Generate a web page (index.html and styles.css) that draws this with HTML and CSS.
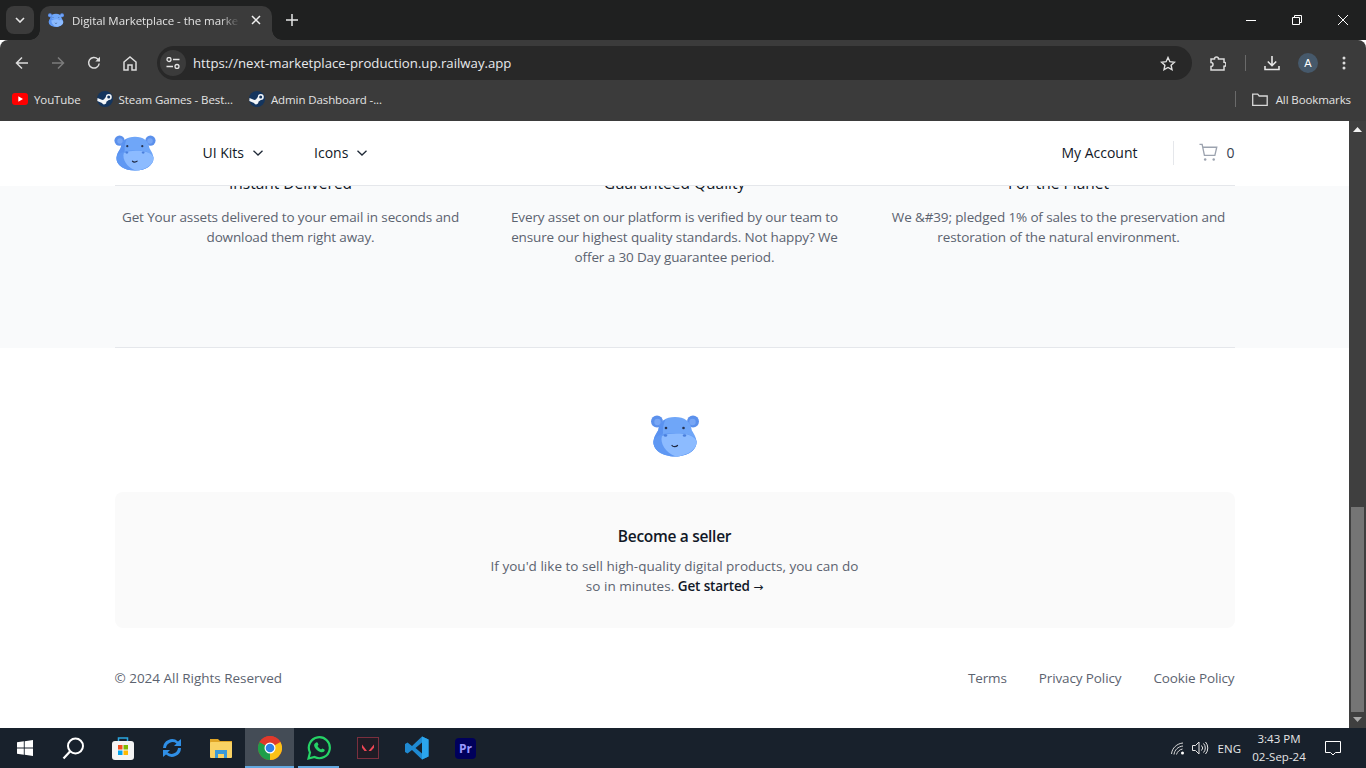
FILE: index.html
```html
<!DOCTYPE html>
<html lang="en">
<head>
  <meta charset="UTF-8" />
  <title>Digital Marketplace - the marketplace</title>
  <link rel="stylesheet" href="styles.css">
</head>
<body>
  <svg class="defs" width="0" height="0">
    <symbol id="hippo" viewBox="0 0 48 42">
      <circle cx="6" cy="6.500" r="6" fill="#5b90ec"/>
      <circle cx="42" cy="6.500" r="6" fill="#5b90ec"/>
      <circle cx="6.500" cy="7" r="3.200" fill="#77a6f5"/>
      <circle cx="41.500" cy="7" r="3.200" fill="#77a6f5"/>
      <path d="M24 2c9.500 0 15.500 4.500 16.500 12 .4 3 4.500 6 5 12.500.5 8.500-9 15-21.500 15S2 35 2.500 26.500c.5-6.500 4.600-9.500 5-12.500C8.500 6.500 14.500 2 24 2z" fill="#6fa6f8"/>
      <path d="M14.500 4.500C10 6.500 8 10 7.500 14c-.4 3-4.500 6-5 12.500-.3 4.500 2 8.500 7.500 11.500-1-8 0-15 2-20-.5-4 .5-9.500 2.500-13.500z" fill="#5a92f0"/>
      <path d="M24 18c13 0 21 3 21.500 8.500.5 8.500-9 15-21.500 15S2 35 2.500 26.500C3 21 11 18 24 18z" fill="#5f98f3"/>
      <path d="M25 18.500c11 0 20 2.500 20.500 8.500.3 7.500-9 13.500-20.500 14.500C15 38.500 8.500 28 11 21c4-1.700 9-2.500 14-2.500z" fill="#8cbbff"/>
      <circle cx="15" cy="13" r="1.300" fill="#26324f"/>
      <circle cx="32.500" cy="13" r="1.300" fill="#26324f"/>
      <ellipse cx="14.500" cy="20.500" rx="1.700" ry="1.300" fill="#4a7fdc"/>
      <ellipse cx="33.500" cy="20.500" rx="1.700" ry="1.300" fill="#4a7fdc"/>
      <path d="M21 30.500c1 1.500 4 1.500 5.500 0" fill="none" stroke="#1d2740" stroke-width="1.300" stroke-linecap="round"/>
    </symbol>
    <symbol id="steam" viewBox="0 0 16 16">
      <circle cx="8" cy="8" r="8" fill="#14355e"/>
      <path d="M.3 10 5 12a2.300 2.300 0 0 0 4.400-1.200l2.400-1.800a3 3 0 1 0-3-3L6.900 8.500A2.300 2.300 0 0 0 5.400 9L.5 7z" fill="#f2f5f8"/>
      <circle cx="11.700" cy="6" r="1.500" fill="#14355e"/>
    </symbol>
  </svg>

  <div class="tabstrip">
    <button class="tab-list"><svg width="10" height="6" viewBox="0 0 10 6"><path d="M1 1l4 4 4-4" fill="none" stroke="#e6e6e6" stroke-width="1.600"/></svg></button>
    <div class="tab">
      <svg class="favicon" width="16" height="14"><use href="#hippo"/></svg>
      <span class="tab-title">Digital Marketplace - the marke</span>
      <svg class="tab-close" width="10" height="10" viewBox="0 0 10 10"><path d="M1 1l8 8M9 1l-8 8" stroke="#f0f0f0" stroke-width="1.500"/></svg>
    </div>
    <svg class="new-tab" width="12" height="12" viewBox="0 0 12 12"><path d="M6 0v12M0 6h12" stroke="#e6e6e6" stroke-width="1.500"/></svg>
    <div class="win-controls">
      <svg width="10" height="10" viewBox="0 0 10 10"><path d="M0 5.500h10" stroke="#fff"/></svg>
      <svg width="10" height="10" viewBox="0 0 10 10"><path d="M2.500 2V.500h7v7H8M.5 2.500h7v7h-7z" fill="none" stroke="#fff"/></svg>
      <svg width="10" height="10" viewBox="0 0 10 10"><path d="M0 0l10 10M10 0L0 10" stroke="#fff"/></svg>
    </div>
  </div>

  <div class="toolbar">
    <button class="tool"><svg width="14" height="14" viewBox="0 0 14 14"><path d="M13 7H2M7 1.500 1.500 7 7 12.500" fill="none" stroke="#dcdcdc" stroke-width="1.500"/></svg></button>
    <button class="tool"><svg width="14" height="14" viewBox="0 0 14 14"><path d="M1 7h11M7 1.500 12.500 7 7 12.500" fill="none" stroke="#7c7c7c" stroke-width="1.500"/></svg></button>
    <button class="tool"><svg width="14" height="14" viewBox="0 0 14 14"><path d="M12.200 7.500A5.300 5.300 0 1 1 10.700 3L12.500 5" fill="none" stroke="#dcdcdc" stroke-width="1.500"/><path d="M13 .800V5.500H8.300z" fill="#dcdcdc"/></svg></button>
    <button class="tool"><svg width="14" height="15" viewBox="0 0 14 15"><path d="M1 14V6l6-5 6 5v8H9V9H5v5z" fill="none" stroke="#dcdcdc" stroke-width="1.500"/></svg></button>
    <div class="omnibox">
      <span class="site-info"><svg width="14" height="12" viewBox="0 0 14 12"><circle cx="3" cy="2.500" r="2" fill="none" stroke="#e6e6e6" stroke-width="1.300"/><path d="M7 2.500h6.500M.5 9.500H7" stroke="#e6e6e6" stroke-width="1.300"/><circle cx="11" cy="9.500" r="2" fill="none" stroke="#e6e6e6" stroke-width="1.300"/></svg></span>
      <span class="url">https://next-marketplace-production.up.railway.app</span>
      <svg class="star" width="16" height="15" viewBox="0 0 16 15"><path d="m8 1.500 1.900 4.200 4.600.500-3.400 3 .9 4.500L8 11.500l-4 2.200.9-4.500-3.400-3 4.600-.500z" fill="none" stroke="#e0e0e0" stroke-width="1.400"/></svg>
    </div>
    <div class="tool-right">
      <button class="tool"><svg width="16" height="16" viewBox="0 0 16 16"><path d="M1 4h3.500a2 2 0 0 1 4 0H14v3.300a2 2 0 0 1 0 4V15H1v-3.500a2 2 0 0 0 0-4z" fill="none" stroke="#dcdcdc" stroke-width="1.500"/></svg></button>
      <span class="tool-sep"></span>
      <button class="tool"><svg width="16" height="16" viewBox="0 0 16 16"><path d="M8 1v9M3.800 6.500 8 10.700l4.200-4.200M1 11v3.500h14V11" fill="none" stroke="#e6e6e6" stroke-width="1.600"/></svg></button>
      <button class="tool"><span class="avatar">A</span></button>
      <button class="tool"><svg width="4" height="14" viewBox="0 0 4 14"><circle cx="2" cy="2" r="1.500" fill="#dcdcdc"/><circle cx="2" cy="7" r="1.500" fill="#dcdcdc"/><circle cx="2" cy="12" r="1.500" fill="#dcdcdc"/></svg></button>
    </div>
  </div>

  <div class="bookmarks">
    <a class="bm"><svg width="16" height="12" viewBox="0 0 16 12"><rect width="16" height="12" rx="3" fill="#f00"/><path d="M6.300 3.200v5.600L11 6z" fill="#fff"/></svg>YouTube</a>
    <a class="bm"><svg width="16" height="16"><use href="#steam"/></svg>Steam Games - Best...</a>
    <a class="bm"><svg width="16" height="16"><use href="#steam"/></svg>Admin Dashboard -...</a>
    <span class="bm-sep"></span>
    <a class="bm bm-all"><svg width="16" height="13" viewBox="0 0 16 13"><path d="M.7 11.500V1.200h5l1.500 1.800h8v9.300H.7z" fill="none" stroke="#d8d8d8" stroke-width="1.300"/></svg>All Bookmarks</a>
  </div>

  <div class="viewport">
    <div class="page">
      <header class="site-header">
        <div class="container nav">
          <svg class="logo" width="42" height="36"><use href="#hippo"/></svg>
          <a class="nav-link nav-first">UI Kits <svg width="10" height="6" viewBox="0 0 10 6"><path d="M.5.700 5 5 9.500.7" fill="none" stroke="#1f2937" stroke-width="1.300"/></svg></a>
          <a class="nav-link">Icons <svg width="10" height="6" viewBox="0 0 10 6"><path d="M.5.700 5 5 9.500.7" fill="none" stroke="#1f2937" stroke-width="1.300"/></svg></a>
          <a class="nav-link nav-account">My Account</a>
          <span class="nav-sep"></span>
          <a class="cart"><svg width="19" height="19" viewBox="0 0 20 19"><path d="M.5 1h2.800l2.400 11.500h11l2-8.500H4" fill="none" stroke="#9ca3af" stroke-width="1.400"/><circle cx="6.500" cy="16.800" r="1.300" fill="#9ca3af"/><circle cx="15.500" cy="16.800" r="1.300" fill="#9ca3af"/></svg>0</a>
        </div>
      </header>

      <section class="perks">
        <div class="container perks-grid">
          <div class="perk">
            <h3>Instant Delivered</h3>
            <p>Get Your assets delivered to your email in seconds and<br>download them right away.</p>
          </div>
          <div class="perk">
            <h3>Guaranteed Quality</h3>
            <p>Every asset on our platform is verified by our team to<br>ensure our highest quality standards. Not happy? We<br>offer a 30 Day guarantee period.</p>
          </div>
          <div class="perk">
            <h3>For the Planet</h3>
            <p>We &amp;#39; pledged 1% of sales to the preservation and<br>restoration of the natural environment.</p>
          </div>
        </div>
      </section>

      <footer class="container site-footer">
        <div class="footer-logo"><svg width="48" height="42"><use href="#hippo"/></svg></div>
        <div class="seller-card">
          <h3>Become a seller</h3>
          <p>If you'd like to sell high-quality digital products, you can do<br>so in minutes. <a>Get started <span class="arrow">→</span></a></p>
        </div>
        <div class="legal">
          <span>© 2024 All Rights Reserved</span>
          <nav class="legal-links">
            <a>Terms</a>
            <a>Privacy Policy</a>
            <a>Cookie Policy</a>
          </nav>
        </div>
      </footer>
    </div>
    <div class="scrollbar">
      <svg width="9" height="5" viewBox="0 0 9 5"><path d="M4.500 0 9 5H0z" fill="#f2f2f2"/></svg>
      <div class="scroll-thumb"></div>
      <svg width="9" height="5" viewBox="0 0 9 5"><path d="M4.500 5 9 0H0z" fill="#a8a8a8"/></svg>
    </div>
  </div>

  <div class="taskbar">
    <span class="task"><svg width="16" height="16" viewBox="0 0 16 16"><path d="M0 2.300 6.800 1.300v6.300H0zM7.700 1.200 16 0v7.600H7.700zM0 8.400h6.800v6.300L0 13.700zM7.700 8.400H16V16l-8.300-1.200z" fill="#fff"/></svg></span>
    <span class="task"><svg width="23" height="23" viewBox="0 0 23 23"><circle cx="13.500" cy="9" r="7.500" fill="none" stroke="#fff" stroke-width="2"/><path d="M8 14.500 1.500 21.500" stroke="#fff" stroke-width="2.200"/></svg></span>
    <span class="task"><svg width="24" height="24" viewBox="0 0 24 24"><path d="M7.500 5V2h9v3" fill="none" stroke="#2aa6e0" stroke-width="1.500"/><rect x="1" y="5" width="22" height="19" rx="3" fill="#f4f4f4"/><rect x="7" y="9" width="4.500" height="4.500" fill="#f25022"/><rect x="12.500" y="9" width="4.500" height="4.500" fill="#7fba00"/><rect x="7" y="14.500" width="4.500" height="4.500" fill="#00a4ef"/><rect x="12.500" y="14.500" width="4.500" height="4.500" fill="#ffb900"/></svg></span>
    <span class="task"><svg width="22" height="22" viewBox="0 0 22 22"><path d="M2 11a9 9 0 0 1 15-6.500L20 2v7h-7l2.500-2.500A6.500 6.500 0 0 0 5 11zM20 11a9 9 0 0 1-15 6.500L2 20v-7h7l-2.500 2.500A6.500 6.500 0 0 0 17 11z" fill="#2f8fe6"/></svg></span>
    <span class="task"><svg width="22" height="20" viewBox="0 0 22 20"><path d="M0 1h8l2 2h12v3H0z" fill="#e0a526"/><rect y="4" width="22" height="16" rx="1" fill="#f9d264"/><path d="M5 12h12v8h-3v-4H8v4H5z" fill="#3a9ad9"/></svg></span>
    <span class="task task-active"><svg width="24" height="24" viewBox="0 0 24 24"><circle cx="12" cy="12" r="12" fill="#e0392b"/><path d="M12 12 1.600 6A12 12 0 0 0 12 24z" fill="#1e9e4a"/><path d="M12 12 22.400 6A12 12 0 0 1 12 24z" fill="#fbc117"/><path d="M1.600 6A12 12 0 0 1 22.400 6H12a6 6 0 0 0-5.200 3z" fill="#e0392b"/><circle cx="12" cy="12" r="5.500" fill="#fff"/><circle cx="12" cy="12" r="4.300" fill="#2f7fe8"/></svg></span>
    <span class="task task-open"><svg width="24" height="24" viewBox="0 0 24 24"><path d="M1.500 22.500 3 16.500A10.500 10.500 0 1 1 7.500 21z" fill="none" stroke="#25d366" stroke-width="2.200"/><path d="M8.500 7c1-1 2-.8 2.300 0l.7 1.800-1 1.300c.7 1.500 2 2.700 3.500 3.400l1.300-1 1.800.8c.8.400.8 1.500 0 2.300-1.300 1.200-3.500 1-6-.6-2.500-1.700-4-4-4-5.700 0-.9.500-1.500 1.400-2.300z" fill="#25d366"/></svg></span>
    <span class="task"><svg width="22" height="22" viewBox="0 0 22 22"><rect x=".5" y=".5" width="21" height="21" fill="#1f1c25" stroke="#7a2f3e"/><path d="M5 7.500 10 14H7.500L5 10.800zM17 7.500 11.500 14H14l3-3.300z" fill="#ef4655"/></svg></span>
    <span class="task"><svg width="24" height="24" viewBox="0 0 24 24"><path d="M17 .500 23.500 3.500v17L17 23.500 7 14l-4.500 3.500L0 16v-8l2.500-1.500L7 10z" fill="#1f8ad2"/><path d="M17 .500 23.500 3.500v17L17 23.500z" fill="#2ba5ec"/><path d="M17 6.500v11L10.500 12z" fill="#17202b"/></svg></span>
    <span class="task"><span class="premiere">Pr</span></span>

    <div class="tray">
      <svg class="tray-wifi" width="14" height="13" viewBox="0 0 14 13"><path d="M.5 12C1 6 6 1.500 12 1M3 12.500C3.500 8 7 4.500 12 4M5.500 12.500C6 10 8.500 7.500 11.500 7" fill="none" stroke="#d8d8d8"/><circle cx="11.500" cy="11" r="1.500" fill="#fff"/></svg>
      <svg class="tray-vol" width="17" height="14" viewBox="0 0 17 14"><path d="M.5 4.500h3L7 1v12L3.500 9.500h-3z" fill="none" stroke="#e6e6e6"/><path d="M9.500 4.500a3.500 3.500 0 0 1 0 5M11.500 2.500a6.500 6.500 0 0 1 0 9M13.500 1a9 9 0 0 1 0 12" fill="none" stroke="#e6e6e6"/></svg>
      <span class="tray-lang">ENG</span>
      <div class="clock"><span>3:43 PM</span><span>02-Sep-24</span></div>
      <svg class="tray-note" width="16" height="15" viewBox="0 0 16 15"><path d="M.5.500h15v11h-5L8 14l-2.500-2.500h-5z" fill="none" stroke="#fff"/></svg>
    </div>
  </div>
</body>
</html>
```
FILE: styles.css
```css
* { box-sizing: border-box; }
html, body { margin: 0; height: 768px; overflow: hidden; }
body { font-family: "Open Sans", "Noto Sans", sans-serif; display: flex; flex-direction: column; background: #fff; }
button { border: 0; background: none; padding: 0; }
h3, p { margin: 0; }
.defs { position: absolute; }

/* browser frame */
.tabstrip { height: 40px; background: #1f2020; display: flex; align-items: flex-start; flex: none; }
.tab-list { width: 28px; height: 28px; margin: 6px 0 0 6px; background: #3b3b3b; border-radius: 8px; display: flex; align-items: center; justify-content: center; }
.tab { position: relative; width: 232px; height: 34px; margin: 6px 0 0 6px; background: #3b3b3b; border-radius: 10px 10px 0 0; display: flex; align-items: center; padding: 0 10px 6px 8px; color: #e3e3e3; font-size: 11.500px; letter-spacing: -.05px; }
.tab::before, .tab::after { content: ""; position: absolute; bottom: 0; width: 10px; height: 10px; }
.tab::before { left: -10px; background: radial-gradient(circle at 0 0, transparent 9.500px, #3b3b3b 10px); }
.tab::after { right: -10px; background: radial-gradient(circle at 100% 0, transparent 9.500px, #3b3b3b 10px); }
.favicon { flex: none; }
.tab-title { margin-left: 8px; width: 168px; flex: none; white-space: nowrap; -webkit-mask-image: linear-gradient(90deg, #000 88%, transparent); mask-image: linear-gradient(90deg, #000 88%, transparent); }
.tab-close { margin-left: 11px; flex: none; }
.new-tab { margin: 14px 0 0 14px; }
.win-controls { margin-left: auto; display: flex; height: 40px; align-items: center; gap: 36px; padding-right: 18px; }
.toolbar { height: 44px; background: #3b3b3b; border-radius: 8px 8px 0 0; display: flex; align-items: center; padding: 2px 4px 0; flex: none; }
.tool { width: 36px; height: 36px; display: flex; align-items: center; justify-content: center; flex: none; }
.omnibox { width: 1035px; height: 34px; margin-left: 9px; background: #282828; border-radius: 17px; display: flex; align-items: center; padding: 0 16px 0 3px; }
.site-info { width: 26px; height: 26px; border-radius: 50%; background: #3b3b3b; display: flex; align-items: center; justify-content: center; }
.url { margin-left: 7px; font-size: 13.200px; color: #e8eaed; }
.star { margin-left: auto; }
.tool-right { display: flex; align-items: center; margin-left: 8px; }
.tool-sep { width: 1px; height: 16px; background: #6a6a6a; margin: 0 8px 0 9px; }
.avatar { width: 20px; height: 20px; border-radius: 50%; background: #46596b; color: #fff; font-size: 11px; display: flex; align-items: center; justify-content: center; }
.bookmarks { height: 37px; background: #3b3b3b; display: flex; align-items: center; padding: 0 15px 7px 12px; color: #e3e3e3; font-size: 11.500px; letter-spacing: -.1px; flex: none; }
.bm { display: flex; align-items: center; gap: 6px; margin-right: 16px; white-space: nowrap; }
.bm-sep { width: 1px; height: 16px; background: #6a6a6a; margin-left: auto; margin-right: 16px; }
.bm-all { margin-right: 0; gap: 8px; }

/* page */
.viewport { height: 607px; display: flex; flex: none; }
.page { flex: 1; min-width: 0; overflow: hidden; color: #5c6370; font-size: 13.500px; letter-spacing: -.13px; }
.container { width: 1120px; margin: 0 auto; }
.site-header { position: relative; z-index: 2; background: #fff; height: 65px; letter-spacing: 0; font-size: 14px; }
.nav { height: 65px; display: flex; align-items: center; padding-bottom: 1px; border-bottom: 1px solid #e5e7eb; }
.logo { margin-left: -1px; }
.nav-link { display: flex; align-items: center; gap: 9px; font-weight: 500; margin-left: 51px; color: #111827; }
.nav-first { margin-left: 47px; }
.nav-account { margin-left: auto; }
.nav-sep { width: 1px; height: 24px; background: #e5e7eb; margin: 0 25px 0 36px; }
.cart { display: flex; align-items: center; gap: 8px; color: #374151; font-weight: 500; }
.perks { background: #f9fafb; margin-top: -15px; height: 177px; }
.perks-grid { display: grid; grid-template-columns: repeat(3, 352px); gap: 32px; height: 177px; border-bottom: 1px solid #e5e7eb; }
.perk { text-align: center; }
.perk h3 { font-size: 15.500px; line-height: 24px; font-weight: 500; letter-spacing: 0; color: #111827; }
.perk p { margin-top: 12px; line-height: 20px; white-space: nowrap; }
.site-footer { display: flex; flex-direction: column; }
.footer-logo { display: flex; justify-content: center; margin-top: 67px; height: 77px; }
.seller-card { height: 136px; background: #fafafa; border-radius: 8px; text-align: center; padding-top: 32px; }
.seller-card h3 { font-size: 15.500px; line-height: 24px; font-weight: 600; letter-spacing: -.3px; color: #111827; }
.seller-card p { margin-top: 8px; line-height: 20px; letter-spacing: .02px; }
.seller-card a { color: #111827; font-weight: 600; letter-spacing: -.13px; }
.arrow { font-family: "DejaVu Sans", sans-serif; font-size: 12px; font-weight: 400; }
.legal { display: flex; justify-content: space-between; margin-top: 40px; line-height: 20px; letter-spacing: -.02px; }
.legal-links { display: flex; gap: 32px; letter-spacing: -.12px; }
.scrollbar { width: 17px; background: #3f3f3f; display: flex; flex-direction: column; align-items: center; padding: 6px 0; flex: none; }
.scroll-thumb { width: 13px; height: 205px; background: #757575; margin-top: auto; margin-bottom: 5px; }

/* windows taskbar */
.taskbar { height: 40px; background: #18212c; display: flex; align-items: center; flex: none; }
.task { width: 49px; height: 40px; padding-top: 2px; display: flex; align-items: center; justify-content: center; flex: none; border-bottom: 2px solid transparent; }
.task-active { background: #444c56; border-bottom-color: #63a8e0; }
.task-open { border-image: linear-gradient(90deg, transparent 10%, #63a8e0 10%, #63a8e0 90%, transparent 90%) 1; }
.premiere { width: 21px; height: 21px; border-radius: 4px; background: #00005b; color: #9999ff; font-size: 12px; font-weight: 700; display: flex; align-items: center; justify-content: center; }
.tray { margin-left: auto; display: flex; align-items: center; color: #e6e6e6; font-size: 11.500px; }
.tray-vol { margin-left: 7px; }
.tray-lang { margin-left: 9px; }
.clock { display: flex; flex-direction: column; align-items: center; line-height: 18px; margin-left: 3px; width: 70px; }
.tray-note { margin: 0 25px 0 11px; }
```
